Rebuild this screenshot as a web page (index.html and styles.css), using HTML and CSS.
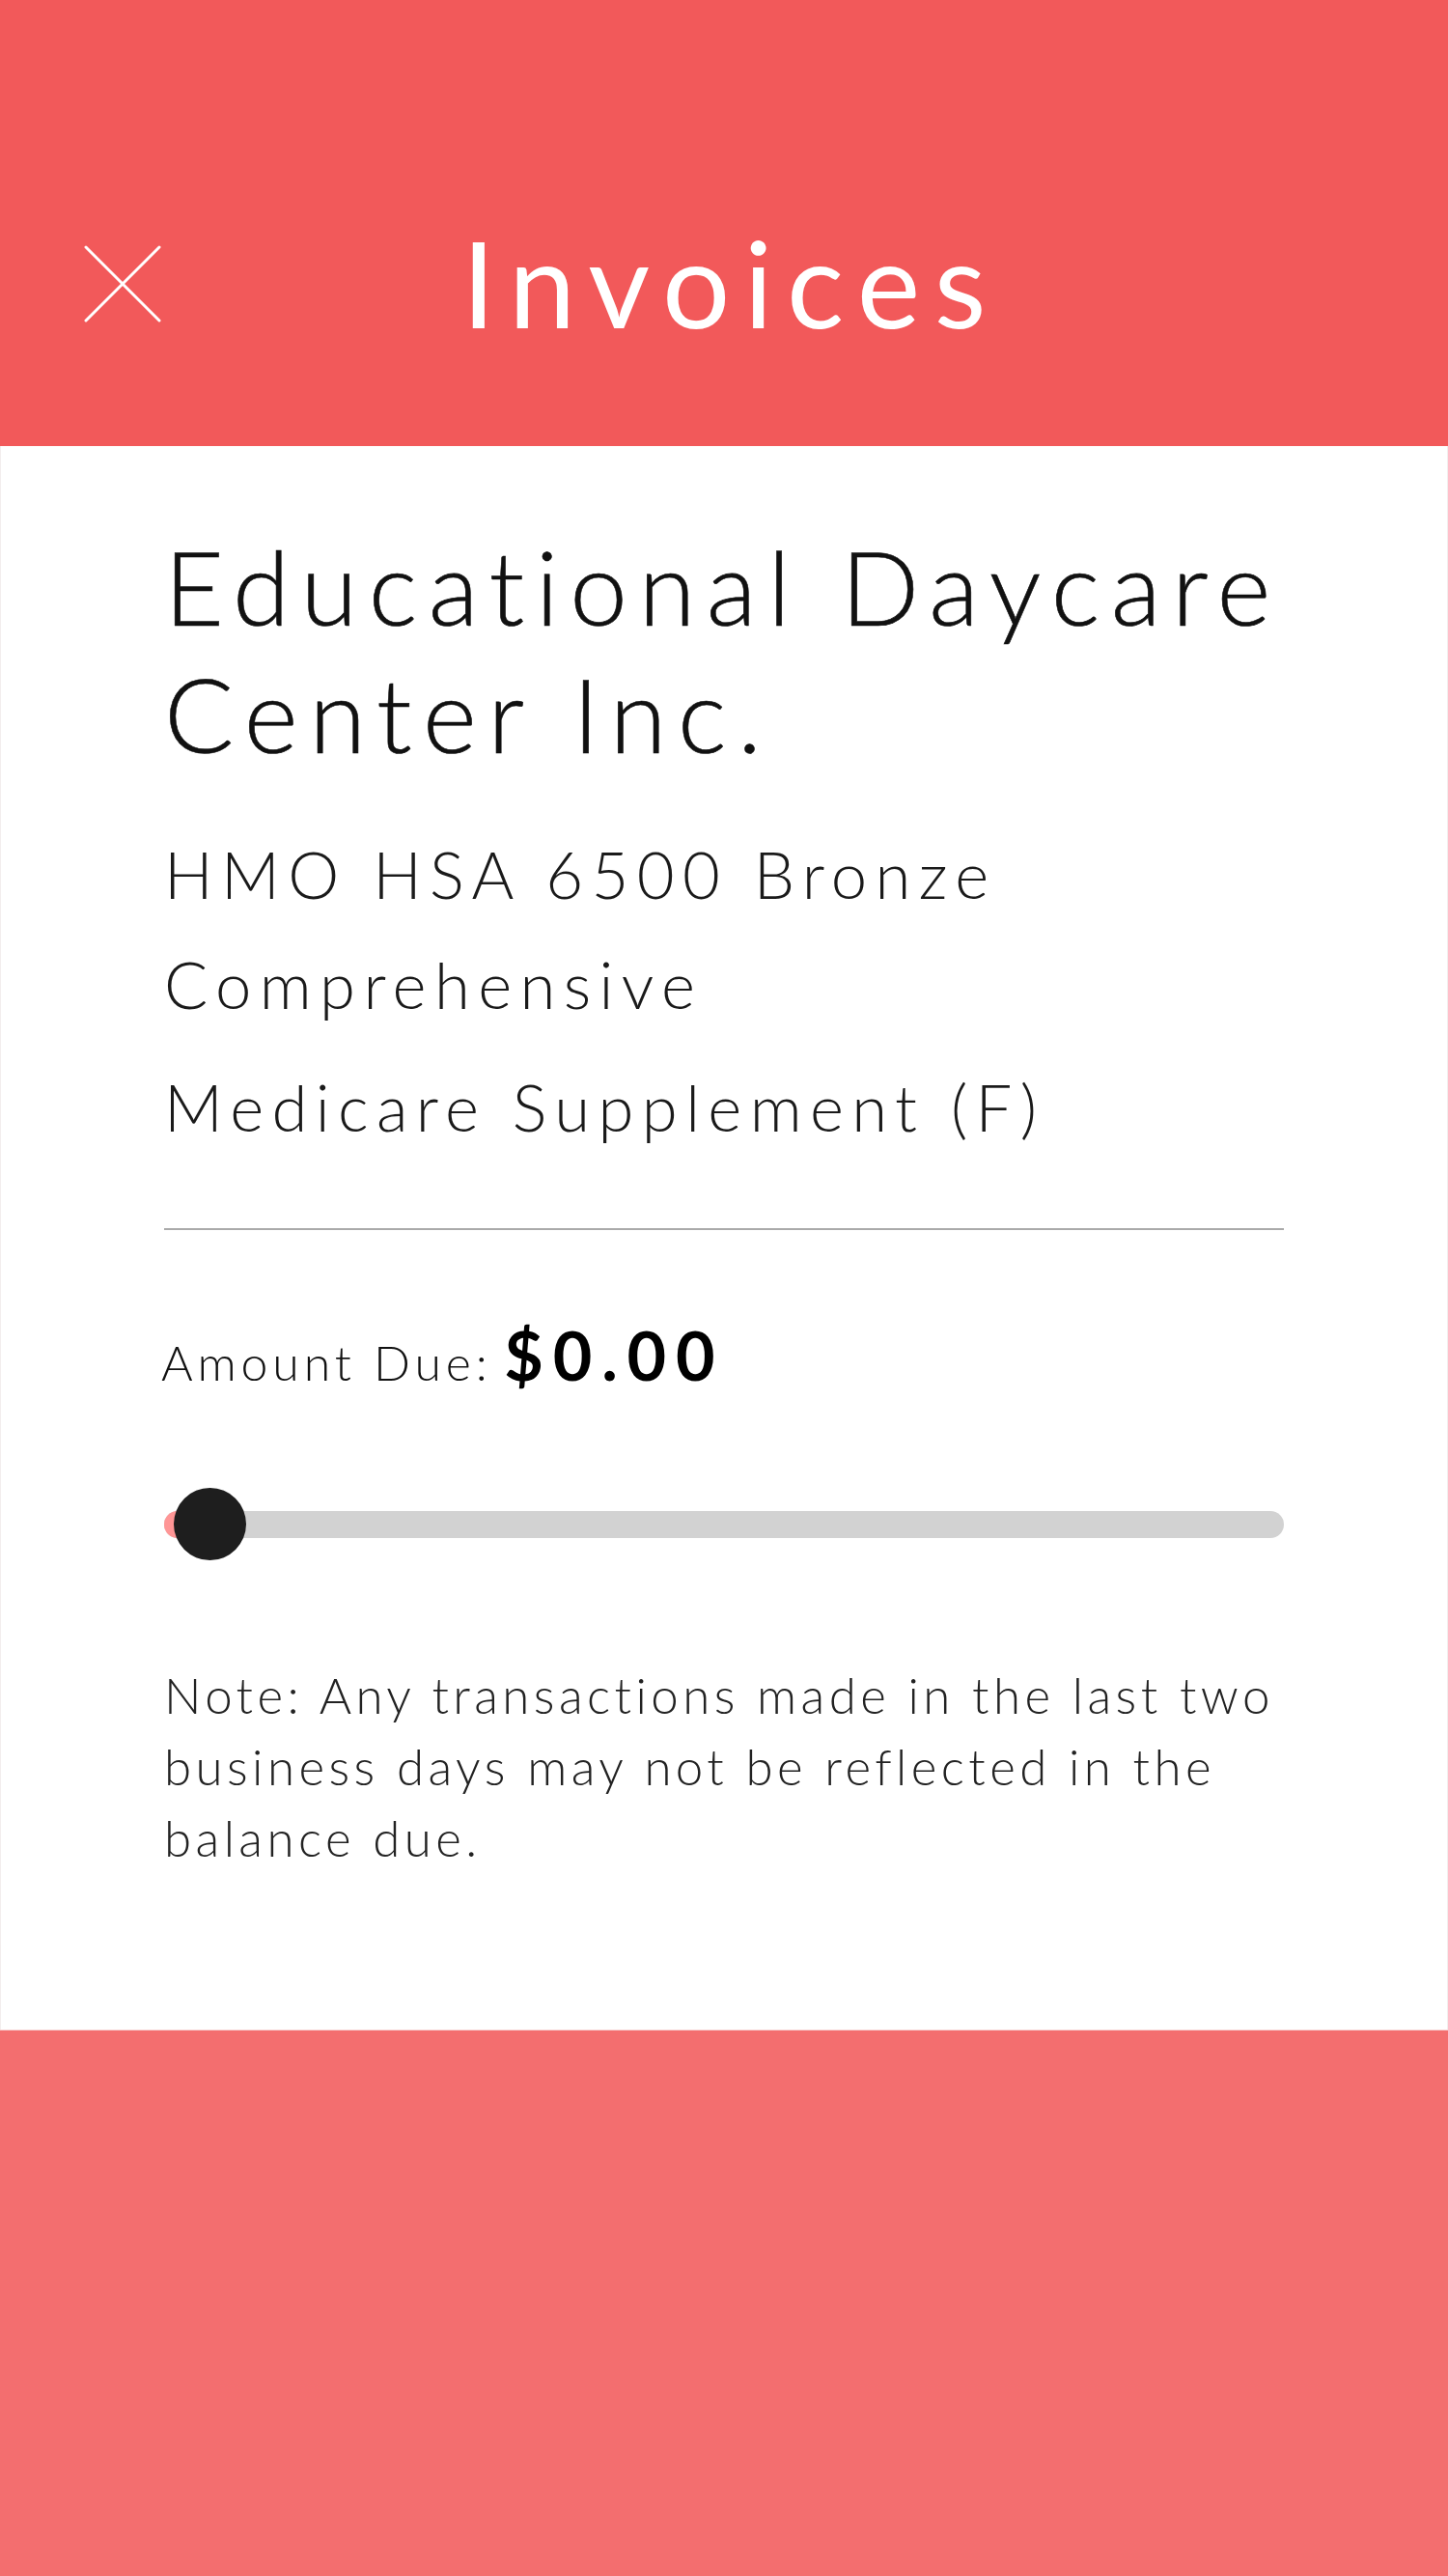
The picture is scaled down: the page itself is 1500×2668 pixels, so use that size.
FILE: index.html
```html
<!DOCTYPE html>
<html lang="en">
<head>
<meta charset="utf-8">
<title>Invoices</title>
<link rel="stylesheet" href="styles.css">
</head>
<body>
<div class="page">
  <header class="topbar">
    <div class="topbar-row">
      <button class="close-btn" aria-label="Close">
        <svg width="80" height="80" viewBox="0 0 80 80" aria-hidden="true">
          <line x1="2" y1="2" x2="78" y2="78" />
          <line x1="78" y1="2" x2="2" y2="78" />
        </svg>
      </button>
      <h1 class="title">Invoices</h1>
      <span class="spacer"></span>
    </div>
  </header>

  <main class="panel">
    <div class="content">
      <h2 class="company">Educational Daycare Center Inc.</h2>
      <p class="plan">HMO HSA 6500 Bronze Comprehensive</p>
      <p class="plan plan-last">Medicare Supplement (F)</p>
      <hr class="divider">
      <div class="amount">
        <span class="amount-label">Amount Due:</span>
        <span class="amount-value">$0.00</span>
      </div>
      <div class="slider">
        <div class="track"><div class="fill"></div></div>
        <div class="thumb"></div>
      </div>
      <p class="note">Note: Any transactions made in the last two business days may not be reflected in the balance due.</p>
    </div>
  </main>

  <footer class="bottom"></footer>
</div>
</body>
</html>
```

FILE: styles.css
```css
* { box-sizing: border-box; }

html, body {
  margin: 0;
  padding: 0;
}

body {
  font-family: Lato, "Open Sans", "Liberation Sans", sans-serif;
  color: #1a1a1a;
  background: #ffffff;
}

.page {
  min-height: 100vh;
  display: flex;
  flex-direction: column;
}

.topbar {
  height: 462px;
  background: #f2595a;
  padding-top: 121px;
  display: flex;
  align-items: center;
}

.topbar-row {
  width: 100%;
  display: grid;
  grid-template-columns: 1fr auto 1fr;
  align-items: center;
}

.close-btn {
  justify-self: start;
  margin-left: 87px;
  margin-top: 5px;
  width: 80px;
  height: 80px;
  padding: 0;
  border: 0;
  background: transparent;
  display: block;
}

.close-btn svg {
  display: block;
}

.close-btn line {
  stroke: #ffffff;
  stroke-width: 3;
  stroke-linecap: round;
}

.title {
  margin: 0;
  color: #ffffff;
  font-weight: 400;
  font-size: 124px;
  line-height: 1;
  letter-spacing: 0.117em;
  margin-right: -0.117em;
}

.panel {
  background: #ffffff;
  border-left: 1px solid #f3eeee;
  border-right: 1px solid #f3eeee;
  padding: 79px 0 161px;
}

.content {
  width: 1160px;
  margin: 0 auto;
}

.company {
  margin: 0;
  font-weight: 300;
  font-size: 107px;
  line-height: 132px;
  letter-spacing: 0.108em;
  color: #111111;
  -webkit-text-stroke: 0.6px #111111;
}

.plan {
  margin: 43px 0 0;
  font-weight: 300;
  font-size: 67px;
  line-height: 114px;
  letter-spacing: 0.125em;
  color: #1a1a1a;
}

.plan-last {
  margin-top: 13px;
}

.divider {
  margin: 69px 0 0;
  border: 0;
  height: 2px;
  background: #aaaaaa;
}

.amount {
  margin-top: 89px;
  margin-left: -3px;
  font-size: 50px;
  line-height: 80px;
  color: #111111;
}

.amount-label {
  font-size: 50px;
  font-weight: 300;
  letter-spacing: 0.097em;
}

.amount-value {
  font-size: 70px;
  font-weight: 700;
  letter-spacing: 0.14em;
  color: #000000;
}

.slider {
  position: relative;
  height: 75px;
  margin-top: 90px;
  display: flex;
  align-items: center;
}

.track {
  width: 100%;
  height: 28px;
  border-radius: 14px;
  background: #d2d2d2;
  overflow: hidden;
}

.fill {
  width: 48px;
  height: 100%;
  background: #ff9696;
}

.thumb {
  position: absolute;
  left: 10px;
  top: 0;
  width: 75px;
  height: 75px;
  border-radius: 50%;
  background: #1e1e1e;
}

.note {
  margin: 103px 0 0;
  font-size: 51px;
  font-weight: 300;
  line-height: 74px;
  letter-spacing: 0.087em;
  color: #222222;
}

.bottom {
  flex: 1;
  background: #f36e6f;
  border-top: 1px solid #f7d6d6;
}
```
